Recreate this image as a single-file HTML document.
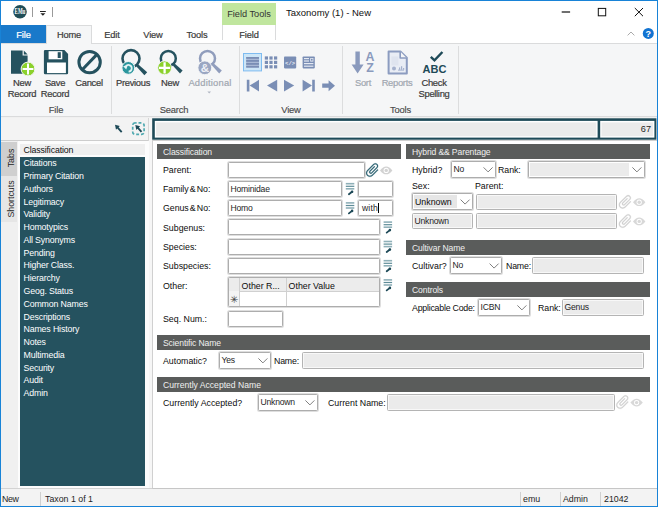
<!DOCTYPE html>
<html>
<head>
<meta charset="utf-8">
<title>Taxonomy (1) - New</title>
<style>
html,body{margin:0;padding:0;}
body{width:658px;height:507px;overflow:hidden;background:#f0f0f0;font-family:"Liberation Sans",sans-serif;font-size:8.8px;color:#1e1e1e;position:relative;}
.a{position:absolute;}
.t{position:absolute;white-space:nowrap;line-height:14px;}
#win{left:0;top:0;width:658px;height:507px;box-sizing:border-box;border:1px solid #1883d7;}
#title{left:1px;top:1px;width:656px;height:42px;background:#fff;}
#ribbon{left:1px;top:43px;width:656px;height:74px;background:#f5f6f7;border-top:1px solid #dadbdc;border-bottom:1px solid #dadbdc;box-sizing:border-box;}
.rt{-webkit-text-stroke:0.2px;font-size:9.3px;color:#3a3a3a;line-height:14px;letter-spacing:-0.15px;margin-top:0.6px;}
.sep{position:absolute;top:46px;width:1px;height:68px;background:#dcddde;}
.gl{-webkit-text-stroke:0.15px;font-size:9.4px;color:#4a4a4a;letter-spacing:-0.2px;margin-top:1px;}
.bl{-webkit-text-stroke:0.2px;font-size:9.4px;color:#3a3a3a;text-align:center;line-height:10.4px;letter-spacing:-0.3px;margin-top:1.3px;}
.dis{color:#a0a6b0;}
/* left list */
#listbox{left:17.5px;top:141px;width:131px;height:348px;background:#fcfcfc;}
#list{left:20px;top:156.6px;width:125.3px;height:329.4px;background:#25525f;}
.li{position:absolute;left:23.5px;margin-top:0.8px;letter-spacing:-0.15px;color:#fff;font-size:8.8px;line-height:12.8px;white-space:nowrap;}
/* main */
#main{left:152px;top:140px;width:505px;height:349px;background:#fff;border:1px solid #d0d0d0;border-right:none;border-bottom-color:#c6c6c6;box-sizing:border-box;}
.hd{position:absolute;height:15px;background:#5a5c5b;color:#f0f0f0;font-size:8.6px;letter-spacing:-0.12px;line-height:17.4px;overflow:hidden;padding-left:6px;box-sizing:border-box;white-space:nowrap;}
.f{position:absolute;box-sizing:border-box;border:1px solid #adadad;background:#fff;box-shadow:0 0 0 1px #dedede;font-size:8.6px;letter-spacing:-0.2px;line-height:14px;padding-left:1.5px;white-space:nowrap;border-radius:1.5px;}
.g{background:#ebebeb;border-color:#b4b4b4;box-shadow:inset 0 0 0 1px #f8f8f8;}
.lb{position:absolute;font-size:8.8px;line-height:14px;white-space:nowrap;color:#0c0c0c;}
</style>
</head>
<body>
<div class="a" id="title"></div>
<div class="a" id="ribbon"></div>

<!-- title bar -->
<div class="a" style="left:222px;top:3px;width:54px;height:22px;background:#c0e69e;"></div>
<div class="t" style="left:222px;top:7px;width:54px;text-align:center;font-size:9.2px;color:#333;">Field Tools</div>
<div class="t" style="left:286px;top:6px;font-size:9.5px;color:#111;">Taxonomy (1) - New</div>

<!-- tabs -->
<div class="a" style="left:1px;top:25px;width:45px;height:18px;background:#1979ca;"></div>
<div class="t rt" style="left:1px;top:27px;width:45px;text-align:center;color:#fff;">File</div>
<div class="a" style="left:46px;top:25px;width:46px;height:19px;background:#f5f6f7;border:1px solid #dadbdc;border-bottom:none;box-sizing:border-box;"></div>
<div class="t rt" style="left:46px;top:27px;width:46px;text-align:center;">Home</div>
<div class="t rt" style="left:92px;top:27px;width:40px;text-align:center;">Edit</div>
<div class="t rt" style="left:132px;top:27px;width:42px;text-align:center;">View</div>
<div class="t rt" style="left:174px;top:27px;width:46px;text-align:center;">Tools</div>
<div class="a" style="left:222px;top:25px;width:54px;height:15px;border-left:1px solid #dadbdc;border-right:1px solid #dadbdc;box-sizing:border-box;"></div>
<div class="t rt" style="left:222px;top:27px;width:54px;text-align:center;">Field</div>

<!-- ribbon seps -->
<div class="sep" style="left:111px;"></div>
<div class="sep" style="left:239px;"></div>
<div class="sep" style="left:342px;"></div>
<div class="sep" style="left:458px;"></div>
<div class="t gl" style="left:1px;top:102px;width:110px;text-align:center;">File</div>
<div class="t gl" style="left:110.5px;top:102px;width:127px;text-align:center;">Search</div>
<div class="t gl" style="left:240px;top:102px;width:102px;text-align:center;">View</div>
<div class="t gl" style="left:343px;top:102px;width:115px;text-align:center;">Tools</div>

<div class="t bl" style="left:2px;top:77px;width:40px;">New<br>Record</div>
<div class="t bl" style="left:35px;top:77px;width:40px;">Save<br>Record</div>
<div class="t bl" style="left:69px;top:77px;width:40px;">Cancel</div>
<div class="t bl" style="left:108px;top:77px;width:50px;">Previous</div>
<div class="t bl" style="left:150px;top:77px;width:40px;">New</div>
<div class="t bl dis" style="left:180px;top:77px;width:60px;letter-spacing:0.2px;">Additional</div>
<div class="t bl dis" style="left:343px;top:77px;width:40px;">Sort</div>
<div class="t bl dis" style="left:372px;top:77px;width:50px;">Reports</div>
<div class="t bl" style="left:409px;top:77px;width:50px;">Check<br>Spelling</div>

<!-- status field -->
<svg class="a" style="left:0;top:110px;" width="658" height="36" viewBox="0 110 658 36">
<rect x="152.2" y="118.3" width="504.2" height="21.4" fill="#1e4a58"/>
<rect x="154.8" y="120.9" width="442.8" height="16.7" fill="#fff"/>
<rect x="156.1" y="122.4" width="440.2" height="13.8" fill="#ebebeb"/>
<rect x="600.2" y="120.9" width="54.2" height="16.7" fill="#fff"/>
<rect x="601.5" y="122.4" width="51.6" height="13.8" fill="#ebebeb"/>
</svg>
<div class="t" style="left:600px;top:122px;width:51px;text-align:right;font-size:9.2px;">67</div>

<div class="a" style="left:1px;top:140px;width:147.5px;height:1px;background:#cdcdcd;"></div>
<div class="a" style="left:148px;top:118px;width:4px;height:371px;background:#f6f6f6;"></div>
<div class="a" style="left:148px;top:118px;width:1px;height:23px;background:#d6d6d6;"></div>
<div class="a" style="left:1px;top:118px;width:147px;height:22px;background:#f3f3f3;"></div>
<!-- side tabs -->
<div class="a" style="left:1px;top:141.6px;width:16.2px;height:34px;background:#cfcfcf;"></div>
<div class="a" style="left:1px;top:175.6px;width:16.2px;height:46.4px;background:#e6e6e6;"></div>
<div class="t" style="left:11px;top:158px;transform:translate(-50%,-50%) rotate(-90deg);font-size:8.8px;">Tabs</div>
<div class="t" style="left:11px;top:199px;transform:translate(-50%,-50%) rotate(-90deg);font-size:8.8px;">Shortcuts</div>

<!-- list -->
<div class="a" id="listbox"></div>
<div class="a" id="list"></div>
<div class="a" style="left:20px;top:143.8px;width:125.3px;height:11.2px;background:#efefef;"></div>
<div class="li" style="top:143.7px;color:#111;">Classification</div>
<div class="li" style="top:156.5px;">Citations</div>
<div class="li" style="top:169.3px;">Primary Citation</div>
<div class="li" style="top:182.0px;">Authors</div>
<div class="li" style="top:194.8px;">Legitimacy</div>
<div class="li" style="top:207.6px;">Validity</div>
<div class="li" style="top:220.4px;">Homotypics</div>
<div class="li" style="top:233.2px;">All Synonyms</div>
<div class="li" style="top:245.9px;">Pending</div>
<div class="li" style="top:258.7px;">Higher Class.</div>
<div class="li" style="top:271.5px;">Hierarchy</div>
<div class="li" style="top:284.3px;">Geog. Status</div>
<div class="li" style="top:297.1px;">Common Names</div>
<div class="li" style="top:309.8px;">Descriptions</div>
<div class="li" style="top:322.6px;">Names History</div>
<div class="li" style="top:335.4px;">Notes</div>
<div class="li" style="top:348.2px;">Multimedia</div>
<div class="li" style="top:361.0px;">Security</div>
<div class="li" style="top:373.7px;">Audit</div>
<div class="li" style="top:386.5px;">Admin</div>

<!-- main panel -->
<div class="a" id="main"></div>
<div class="hd" style="left:157px;top:144px;width:244px;">Classification</div>
<div class="hd" style="left:406px;top:144px;width:244px;">Hybrid &amp;&amp; Parentage</div>
<div class="hd" style="left:406px;top:240px;width:244px;">Cultivar Name</div>
<div class="hd" style="left:406px;top:282px;width:244px;">Controls</div>
<div class="hd" style="left:157px;top:335px;width:493px;">Scientific Name</div>
<div class="hd" style="left:157px;top:377px;width:493px;letter-spacing:0;">Currently Accepted Name</div>

<div class="lb" style="left:163px;top:163px;">Parent:</div>
<div class="lb" style="left:163px;top:182px;"><span style="word-spacing:-1.2px;letter-spacing:-0.05px">Family &amp; No:</span></div>
<div class="lb" style="left:163px;top:201px;"><span style="word-spacing:-1.2px;letter-spacing:-0.05px">Genus &amp; No:</span></div>
<div class="lb" style="left:163px;top:221px;">Subgenus:</div>
<div class="lb" style="left:163px;top:240px;">Species:</div>
<div class="lb" style="left:163px;top:259px;">Subspecies:</div>
<div class="lb" style="left:163px;top:279px;">Other:</div>
<div class="lb" style="left:163px;top:312px;">Seq. Num.:</div>

<div class="f" style="left:228px;top:162px;width:137px;height:16px;"></div>
<div class="f" style="left:228px;top:181px;width:114px;height:16px;">Hominidae</div>
<div class="f" style="left:358px;top:181px;width:35px;height:16px;"></div>
<div class="f" style="left:228px;top:200px;width:114px;height:16px;">Homo</div>
<div class="f" style="left:358px;top:200px;width:35px;height:16px;padding-left:3px;letter-spacing:0.15px;">with<span style="display:inline-block;width:1px;height:10px;background:#000;vertical-align:-2px;margin-left:0.6px;"></span></div>
<div class="f" style="left:228px;top:219px;width:152px;height:16px;"></div>
<div class="f" style="left:228px;top:239px;width:152px;height:16px;"></div>
<div class="f" style="left:228px;top:258px;width:152px;height:16px;"></div>
<div class="f" style="left:228px;top:277px;width:152px;height:30px;padding:0;"></div>
<div class="a" style="left:229px;top:278px;width:150px;height:14px;background:#ececec;border-bottom:1px solid #d0d0d0;box-sizing:border-box;"></div>
<div class="a" style="left:229px;top:278px;width:11px;height:28px;background:#f4f4f4;border-right:1px solid #d0d0d0;box-sizing:border-box;"></div>
<div class="a" style="left:229px;top:278px;width:10px;height:13px;background:#ececec;"></div>
<div class="a" style="left:286px;top:278px;width:1px;height:28px;background:#d0d0d0;"></div>
<div class="lb" style="left:241.6px;top:278.8px;">Other R...</div>
<div class="lb" style="left:288.6px;top:278.8px;">Other Value</div>
<div class="lb" style="left:230px;top:293px;font-size:10px;color:#444;">✳</div>
<div class="f" style="left:228px;top:311px;width:55px;height:16px;"></div>

<!-- right column -->
<div class="lb" style="left:412px;top:163px;">Hybrid?</div>
<div class="f" style="left:451px;top:161px;width:45px;height:17px;line-height:15.4px;">No</div>
<div class="lb" style="left:498px;top:163px;letter-spacing:-0.05px;">Rank:</div>
<div class="f" style="left:528px;top:161px;width:117px;height:17px;line-height:15.4px;"></div>
<div class="a" style="left:530px;top:163px;width:99px;height:13px;background:#ebebeb;"></div>
<div class="lb" style="left:412px;top:179px;">Sex:</div>
<div class="lb" style="left:475px;top:179px;">Parent:</div>
<div class="f" style="left:412px;top:193px;width:61px;height:17px;line-height:15.4px;"></div>
<div class="a" style="left:414px;top:195px;width:43px;height:13px;background:#e6e6e6;"></div>
<div class="lb" style="left:415px;top:195px;">Unknown</div>
<div class="f g" style="left:476px;top:194px;width:141px;height:16px;"></div>
<div class="f g" style="left:412px;top:213px;width:61px;height:16px;">Unknown</div>
<div class="f g" style="left:476px;top:213px;width:141px;height:16px;"></div>

<div class="lb" style="left:412px;top:259px;">Cultivar?</div>
<div class="f" style="left:450px;top:257px;width:52px;height:17px;line-height:15.4px;">No</div>
<div class="lb" style="left:506px;top:259px;letter-spacing:-0.2px;">Name:</div>
<div class="f g" style="left:532px;top:257px;width:112px;height:17px;line-height:15.4px;"></div>

<div class="lb" style="left:412px;top:301px;letter-spacing:-0.23px;">Applicable Code:</div>
<div class="f" style="left:478px;top:299px;width:52px;height:17px;line-height:15.4px;">ICBN</div>
<div class="lb" style="left:538px;top:301px;letter-spacing:-0.05px;">Rank:</div>
<div class="f g" style="left:562px;top:299px;width:82px;height:17px;line-height:15.4px;">Genus</div>

<div class="lb" style="left:163px;top:354px;">Automatic?</div>
<div class="f" style="left:219px;top:352px;width:52px;height:17px;line-height:15.4px;">Yes</div>
<div class="lb" style="left:274px;top:354px;letter-spacing:-0.2px;">Name:</div>
<div class="f g" style="left:302px;top:352px;width:342px;height:17px;line-height:15.4px;"></div>

<div class="lb" style="left:163px;top:396px;">Currently Accepted?</div>
<div class="f" style="left:258px;top:394px;width:60px;height:17px;line-height:15.4px;">Unknown</div>
<div class="lb" style="left:328px;top:396px;">Current Name:</div>
<div class="f g" style="left:387px;top:394px;width:228px;height:17px;line-height:15.4px;"></div>

<!-- status bar -->
<div class="a" style="left:1px;top:489px;width:656px;height:17px;background:#f3f3f3;"></div>
<div class="a" style="left:1px;top:488px;width:151px;height:1px;background:#d3d3d3;"></div>
<div class="t" style="left:2px;top:492px;letter-spacing:-0.4px;">New</div>
<div class="a" style="left:40px;top:492px;width:1px;height:14px;background:#d0d0d0;"></div>
<div class="t" style="left:45px;top:492px;">Taxon 1 of 1</div>
<div class="a" style="left:520px;top:492px;width:1px;height:14px;background:#d0d0d0;"></div>
<div class="t" style="left:523px;top:492px;">emu</div>
<div class="a" style="left:560px;top:492px;width:1px;height:14px;background:#d0d0d0;"></div>
<div class="t" style="left:563px;top:492px;">Admin</div>
<div class="a" style="left:600px;top:492px;width:1px;height:14px;background:#d0d0d0;"></div>
<div class="t" style="left:604px;top:492px;">21042</div>


<!-- icons overlay -->
<svg class="a" style="left:0;top:0;" width="658" height="507" viewBox="0 0 658 507">
<defs>
<g id="clip">
<path transform="translate(6.6,6.9) rotate(45) scale(0.70) translate(-12.5,-12)" stroke-width="0.3" d="M16.5 6v11.5c0 2.21-1.79 4-4 4s-4-1.79-4-4V5c0-1.38 1.12-2.5 2.5-2.5s2.5 1.12 2.5 2.5v10.5c0 .55-.45 1-1 1s-1-.45-1-1V6H10v9.5c0 1.38 1.12 2.5 2.5 2.5s2.5-1.12 2.5-2.5V5c0-2.21-1.790-4-4-4S7 2.79 7 5v12.5c0 3.04 2.46 5.5 5.5 5.5s5.5-2.46 5.5-5.5V6h-1.5z"/>
</g>
<g id="eye">
<path d="M0 4.2 Q6.2 -3.6 12.4 4.2 Q6.2 12 0 4.2 Z"/>
<circle cx="6.2" cy="4.2" r="2.6" fill="#fff"/>
<circle cx="6.2" cy="4.2" r="1.7"/>
</g>
<g id="lk">
<rect x="0" y="0.1" width="8.5" height="1.6" fill="#8fb0b8"/>
<rect x="0" y="2.9" width="8.5" height="1.2" fill="#5f8d98"/>
<rect x="0" y="5.2" width="8.5" height="1.6" fill="#8fb0b8"/>
<path d="M6.3 8.9 L3.1 11.4" stroke="#1e4a58" stroke-width="1.8" stroke-linecap="round" fill="none"/>
<circle cx="6.3" cy="8.9" r="1.3" fill="#1e4a58"/>
</g>
<g id="dd" fill="none" stroke="#707070" stroke-width="0.9">
<path d="M0 0 L4.5 4.5 L9 0"/>
</g>
</defs>

<!-- logo -->
<circle cx="20" cy="11.8" r="6.8" fill="#1f4d57"/>
<text x="14.6" y="14.3" font-family="Liberation Serif, serif" font-weight="bold" font-size="7.2" fill="#fff" textLength="10.8" lengthAdjust="spacingAndGlyphs">EMu</text>
<rect x="32" y="7" width="1" height="10" fill="#9a9a9a"/>
<rect x="52" y="7" width="1" height="10" fill="#9a9a9a"/>
<rect x="40" y="11" width="5.8" height="1" fill="#222"/>
<path d="M40.4 13.2 L45.4 13.2 L42.9 15.8 Z" fill="#222"/>

<!-- window controls -->
<rect x="561.7" y="11.4" width="8.4" height="1.2" fill="#111"/>
<rect x="598.3" y="8.4" width="7.4" height="7.4" fill="none" stroke="#111" stroke-width="1"/>
<path d="M634.8 8 L643 16.2 M643 8 L634.8 16.2" stroke="#111" stroke-width="1" fill="none"/>
<path d="M627.6 35.4 L631 32 L634.4 35.4" stroke="#aaa" stroke-width="1" fill="none"/>
<circle cx="648.3" cy="33.4" r="5.5" fill="#1273d1"/>
<text x="648.3" y="36.8" font-family="Liberation Sans, sans-serif" font-weight="bold" font-size="9" fill="#fff" text-anchor="middle">?</text>

<!-- New Record -->
<path d="M11 50.4 L22.6 50.4 L22.6 55.6 L27.6 55.6 L27.6 73.8 L11 73.8 Z" fill="#25525f"/>
<path d="M23.8 50.6 L27.6 54.4 L23.8 54.4 Z" fill="#25525f"/>
<circle cx="28" cy="69" r="6.9" fill="#8bd12c" stroke="#f5f6f7" stroke-width="1"/>
<path d="M28 63.6 L28 74.4 M22.6 69 L33.4 69" stroke="#fff" stroke-width="2"/>

<!-- Save -->
<path d="M45.1 50 L64.4 50 L68.1 53.9 L68.1 73 A1.2 1.2 0 0 1 66.9 74.2 L45.1 74.2 A1.2 1.2 0 0 1 43.9 73 L43.9 51.2 A1.2 1.2 0 0 1 45.1 50 Z" fill="#25525f"/>
<rect x="48.6" y="51.2" width="13.7" height="8.1" fill="#fff"/>
<rect x="57.7" y="52.2" width="3.1" height="5.8" fill="#25525f"/>
<rect x="47" y="62.5" width="18.9" height="10.6" fill="#fff"/>

<!-- Cancel -->
<circle cx="89.6" cy="62.1" r="10.7" fill="none" stroke="#25525f" stroke-width="3"/>
<path d="M82.2 69.8 L97 54.4" stroke="#25525f" stroke-width="3"/>

<!-- Previous -->
<circle cx="131" cy="58.6" r="8.5" fill="none" stroke="#25525f" stroke-width="2.6"/>
<path d="M137.8 64 L147.2 72.2 L144.4 75.2 L136 66 Z" fill="#25525f"/>
<circle cx="128.3" cy="67.9" r="6.4" fill="#2b969d" stroke="#f5f6f7" stroke-width="1"/>
<path d="M125.4 67 A3.3 3.3 0 1 1 128.6 71.6" fill="none" stroke="#e3f3f4" stroke-width="1.7"/>
<path d="M123.2 66.2 L127.8 65 L126.2 69.4 Z" fill="#e3f3f4"/>

<!-- New search -->
<circle cx="168.3" cy="58.4" r="7.5" fill="none" stroke="#25525f" stroke-width="2.5"/>
<path d="M174.6 63.4 L182.6 70.4 L180 73.4 L172.8 65.4 Z" fill="#25525f"/>
<circle cx="164.6" cy="67.8" r="6.9" fill="#8bd12c" stroke="#f5f6f7" stroke-width="0.9"/>
<path d="M164.6 62.2 L164.6 73.4 M159 67.8 L170.2 67.8" stroke="#fff" stroke-width="2.3"/>

<!-- Additional -->
<circle cx="207.5" cy="58.4" r="7.5" fill="none" stroke="#909dbc" stroke-width="2.5"/>
<path d="M213.8 63.4 L221.8 70.4 L219.2 73.4 L212 65.4 Z" fill="#909dbc"/>
<circle cx="204.8" cy="67.8" r="6.9" fill="#9aa6c2" stroke="#f5f6f7" stroke-width="0.9"/>
<text x="204.8" y="71.9" font-family="Liberation Sans, sans-serif" font-weight="bold" font-size="11.5" fill="#eef0f6" text-anchor="middle">&amp;</text>
<path d="M207.4 91.4 L211 91.4 L209.2 93.4 Z" fill="#b0b6c2"/>

<!-- View icons -->
<rect x="243.5" y="53.5" width="18" height="17.4" fill="#cde6f7" stroke="#7fbcf0" stroke-width="1"/>
<g fill="#7a8eb5">
<rect x="246.2" y="57" width="12.8" height="10.6" fill="#a9b8d4"/>
<rect x="246.2" y="57" width="12.8" height="1.8"/>
<rect x="246.2" y="60" width="12.8" height="1.8"/>
<rect x="246.2" y="63" width="12.8" height="1.8"/>
<rect x="246.2" y="66" width="12.8" height="1.6"/>
<rect x="264.8" y="56.4" width="3.2" height="3.2"/><rect x="269.4" y="56.4" width="3.2" height="3.2"/><rect x="274" y="56.4" width="3.2" height="3.2"/>
<rect x="264.8" y="60.8" width="3.2" height="3.2"/><rect x="269.4" y="60.8" width="3.2" height="3.2"/><rect x="274" y="60.8" width="3.2" height="3.2"/>
<rect x="264.8" y="65.2" width="3.2" height="3.2"/><rect x="269.4" y="65.2" width="3.2" height="3.2"/><rect x="274" y="65.2" width="3.2" height="3.2"/>
<rect x="284" y="56.4" width="12.2" height="12" rx="0.8"/>
<rect x="302.6" y="56.4" width="12.2" height="12" rx="0.8"/>
<path d="M246.8 79.8 L249.4 79.8 L249.4 91.4 L246.8 91.4 Z M259 79.8 L259 91.4 L249.6 85.6 Z"/>
<path d="M277.2 79.8 L277.2 91.4 L267 85.6 Z"/>
<path d="M284 79.8 L284 91.4 L294.2 85.6 Z"/>
<path d="M302.6 79.8 L302.6 91.4 L312 85.6 Z M312.2 79.8 L314.8 79.8 L314.8 91.4 L312.2 91.4 Z"/>
<path d="M322.2 83.6 L328.6 83.6 L328.6 80.2 L335 85.7 L328.6 91.2 L328.6 87.8 L322.2 87.8 Z"/>
</g>
<text x="290.1" y="64.6" font-family="Liberation Mono, monospace" font-weight="bold" font-size="5.6" fill="#e8ecf4" text-anchor="middle">&lt;/&gt;</text>
<g fill="#e4e9f2">
<rect x="304" y="58" width="5" height="1.2"/><rect x="304" y="60.4" width="5" height="1.2"/>
<rect x="310.2" y="58" width="3.2" height="3.6"/>
<rect x="304" y="63" width="9.4" height="1.2"/><rect x="304" y="65.6" width="9.4" height="1.2"/>
</g>
<rect x="311" y="58.8" width="1.6" height="1.8" fill="#7a8eb5"/>

<!-- Sort -->
<g fill="#8a9abd">
<path d="M355.4 51.5 L359.8 51.5 L359.8 64.6 L363.6 64.6 L357.6 73.6 L351.6 64.6 L355.4 64.6 Z"/>
</g>
<text x="369.9" y="60.7" font-family="Liberation Sans, sans-serif" font-weight="bold" font-size="12.4" fill="#8a9abd" text-anchor="middle">A</text>
<text x="370.1" y="71.7" font-family="Liberation Sans, sans-serif" font-weight="bold" font-size="12.4" fill="#8a9abd" text-anchor="middle">Z</text>

<!-- Reports -->
<path d="M388.6 51.4 L400.4 51.4 L406.8 57.8 L406.8 73.4 L388.6 73.4 Z" fill="#e9edf5" stroke="#8c9cc0" stroke-width="2" stroke-linejoin="round"/>
<path d="M400.2 51.6 L400.2 58 L406.6 58" fill="#f5f6f7" stroke="#8c9cc0" stroke-width="1.6" stroke-linejoin="round"/>
<rect x="391.4" y="56.4" width="7" height="9" fill="#dfe4ef"/>
<circle cx="394" cy="68.6" r="2" fill="#a5b1cd"/>
<rect x="398" y="69.6" width="6" height="1" fill="#a5b1cd"/>
<rect x="399" y="67.4" width="1.2" height="2.4" fill="#a5b1cd"/><rect x="401" y="66.2" width="1.2" height="3.6" fill="#a5b1cd"/><rect x="403" y="68" width="1.2" height="1.8" fill="#a5b1cd"/>

<!-- Check spelling -->
<path d="M430.8 56.8 L434.5 60.3 L442.4 52" stroke="#1e4a58" stroke-width="2.4" fill="none"/>
<text x="434.5" y="72.8" font-family="Liberation Sans, sans-serif" font-weight="bold" font-size="11" fill="#1e4a58" text-anchor="middle">ABC</text>

<!-- pointer tools -->
<path d="M115 124.8 L119.8 126 L118.6 127.2 L122.4 131.6 L121 132.8 L117.2 128.6 L116 129.8 Z" fill="#1e4a58"/>
<rect x="132.7" y="122.9" width="11.4" height="11.4" rx="2.4" fill="none" stroke="#4fa9b0" stroke-width="1.7" stroke-dasharray="2.9 1.9" stroke-dashoffset="1.4"/>
<path d="M135.3 125 L140.1 126.2 L138.9 127.4 L142.2 131.2 L140.8 132.4 L137.5 128.8 L136.3 130 Z" fill="#1e4a58"/>

<!-- paperclips / eyes -->
<use href="#clip" x="366" y="163.4" fill="#2e6373" stroke="#2e6373"/>
<use href="#eye" x="380" y="166.2" fill="#d2d2d2"/>
<use href="#clip" x="618.8" y="195.2" fill="#d0d0d0" stroke="#d0d0d0"/>
<use href="#eye" x="633" y="198" fill="#d8d8d8"/>
<use href="#clip" x="618.8" y="214.4" fill="#d0d0d0" stroke="#d0d0d0"/>
<use href="#eye" x="633" y="217.2" fill="#d8d8d8"/>
<use href="#clip" x="616.2" y="395.4" fill="#d0d0d0" stroke="#d0d0d0"/>
<use href="#eye" x="630.4" y="398.4" fill="#d8d8d8"/>

<!-- lookup icons -->
<use href="#lk" x="345.8" y="182.8"/>
<use href="#lk" x="345.8" y="202"/>
<use href="#lk" x="383.6" y="221.2"/>
<use href="#lk" x="383.6" y="240.6"/>
<use href="#lk" x="383.6" y="259.8"/>
<use href="#lk" x="383.6" y="279"/>

<!-- dropdown arrows -->
<use href="#dd" x="483.6" y="167.4"/>
<use href="#dd" x="632.4" y="167.4"/>
<use href="#dd" x="460.6" y="199.6"/>
<use href="#dd" x="489.6" y="263.6"/>
<use href="#dd" x="517.4" y="305.4"/>
<use href="#dd" x="258.4" y="358.4"/>
<use href="#dd" x="305.4" y="400.4"/>
</svg>
<div class="a" id="win"></div>
</body>
</html>
